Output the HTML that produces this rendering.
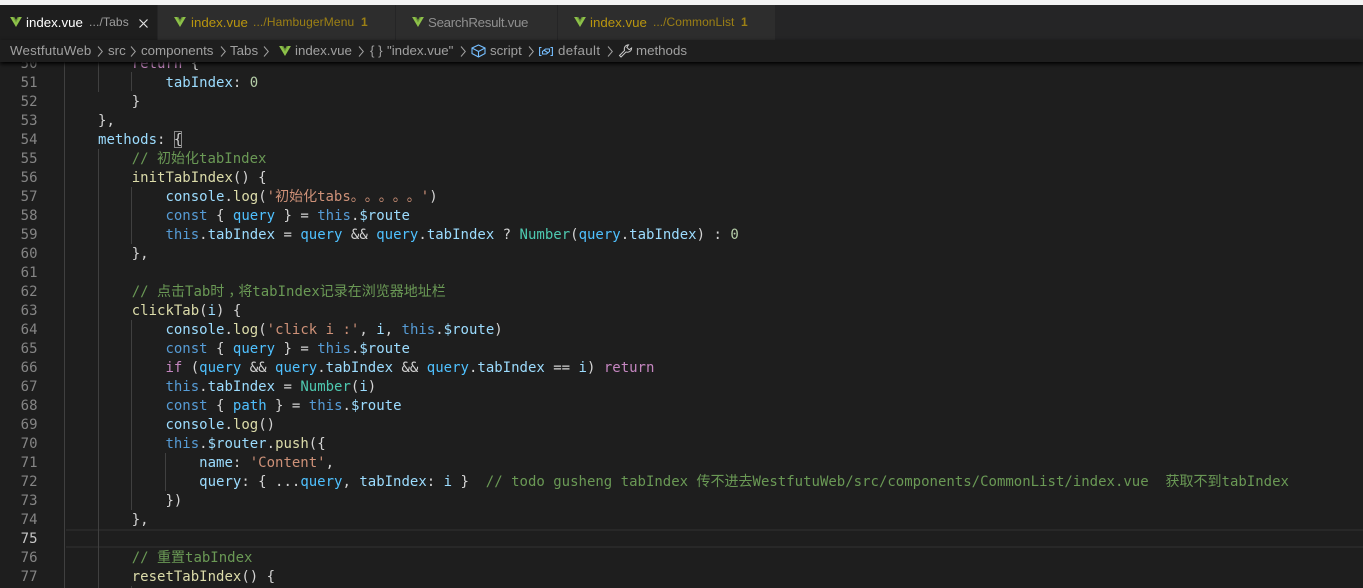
<!DOCTYPE html>
<html><head><meta charset="utf-8"><style>
*{margin:0;padding:0;box-sizing:border-box}
html,body{width:1363px;height:588px;overflow:hidden;background:#1e1e1e}
.a{position:absolute;white-space:pre}
#top{position:absolute;left:0;top:0;width:1363px;height:5px;background:#f3f3f3}
#tabs{position:absolute;left:0;top:5px;width:1363px;height:35px;background:#252526}
.tab{position:absolute;top:5px;height:35px;background:#2d2d2d;border-right:1px solid #252526}
.u{font:13.3px/35px "Liberation Sans","Noto Sans CJK SC",sans-serif;top:5px}
.d{font-size:12px;opacity:.8}
.w{color:#b8950f}
.b{font:13.3px/22px "Liberation Sans",sans-serif;top:40px;color:#a0a0a0}
#bc{position:absolute;left:0;top:40px;width:1363px;height:22px;background:#1e1e1e;box-shadow:0 2px 4px #000;z-index:2}
svg{position:absolute;overflow:visible}
#ed{position:absolute;left:0;top:62px;width:1363px;height:526px;overflow:hidden}
.g{position:absolute;width:1px;background:#404040}
.l{position:absolute;left:64.3px;height:19px;margin-top:1px;font:14px/19px "DejaVu Sans Mono","WenQuanYi Zen Hei",monospace;color:#d4d4d4;white-space:pre;text-spacing-trim:space-all}
.n{position:absolute;left:0;width:37.5px;margin-top:1px;text-align:right;font:14px/19px "DejaVu Sans Mono",monospace;color:#858585}
.k{color:#569cd6}.q{color:#4fc1ff}.p{color:#9cdcfe}.f{color:#dcdcaa}.c{color:#6a9955}.s{color:#ce9178}.m{color:#b5cea8}.t{color:#4ec9b0}.r{color:#c586c0}
</style></head><body>
<svg width="0" height="0" style="position:absolute"><defs>
<symbol id="v" viewBox="0 .5 13 11"><path fill="#8dc149" d="M0 .5H4.500L6.500 4 8.500 .5H13L6.500 11.500Z"/><path fill="#6a9438" d="M3 .5H4.500L6.500 4 8.500 .5H10L6.500 6.500Z"/></symbol>
<symbol id="c" viewBox="0 0 6 11"><path d="M1 .5 5.300 5.500 1 10.500" stroke="#a0a0a0" fill="none"/></symbol>
</defs></svg>
<div id="top"></div>
<div id="tabs"></div>
<div class="tab" style="left:0;width:158px;background:#1e1e1e"></div>
<div class="tab" style="left:158px;width:238px"></div>
<div class="tab" style="left:396px;width:162px"></div>
<div class="tab" style="left:558px;width:217px;border-right:0"></div>

<svg style="left:10px;top:17px" width="12" height="10"><use href="#v" width="12" height="10"/></svg>
<span class="a u" style="left:26px;color:#fff">index.vue</span>
<span class="a u d" style="left:89px;color:#bdbdbd;letter-spacing:.15px">.../Tabs</span>
<svg style="left:139px;top:19px" width="9" height="9"><path d="M.5.5 8.500 8.500M8.500 .5.5 8.500" stroke="#e0e0e0" stroke-width="1.200" fill="none"/></svg>

<svg style="left:174px;top:17px" width="12" height="10"><use href="#v" width="12" height="10"/></svg>
<span class="a u w" style="left:191px">index.vue</span>
<span class="a u d w" style="left:253px;letter-spacing:.12px">.../HambugerMenu</span>
<span class="a u d w" style="left:361px;font-weight:bold">1</span>

<svg style="left:412px;top:17px" width="12" height="10"><use href="#v" width="12" height="10"/></svg>
<span class="a u" style="left:428px;color:#8f8f8f;letter-spacing:-.3px">SearchResult.vue</span>

<svg style="left:574px;top:17px" width="12" height="10"><use href="#v" width="12" height="10"/></svg>
<span class="a u w" style="left:590px">index.vue</span>
<span class="a u d w" style="left:653px;letter-spacing:.05px">.../CommonList</span>
<span class="a u d w" style="left:741px;font-weight:bold">1</span>

<div id="bc"></div>
<div style="position:absolute;left:0;top:0;z-index:3">
<span class="a b" style="left:10px;letter-spacing:.2px">WestfutuWeb</span>
<svg style="left:97px;top:46px" width="6" height="11"><use href="#c" width="6" height="11"/></svg>
<span class="a b" style="left:108px">src</span>
<svg style="left:130px;top:46px" width="6" height="11"><use href="#c" width="6" height="11"/></svg>
<span class="a b" style="left:141px">components</span>
<svg style="left:220px;top:46px" width="6" height="11"><use href="#c" width="6" height="11"/></svg>
<span class="a b" style="left:230px">Tabs</span>
<svg style="left:263px;top:46px" width="6" height="11"><use href="#c" width="6" height="11"/></svg>
<svg style="left:279px;top:46px" width="12" height="10"><use href="#v" width="12" height="10"/></svg>
<span class="a b" style="left:295px">index.vue</span>
<svg style="left:358px;top:46px" width="6" height="11"><use href="#c" width="6" height="11"/></svg>
<span class="a b" style="left:370px">{ }</span>
<span class="a b" style="left:387px">"index.vue"</span>
<svg style="left:460px;top:46px" width="6" height="11"><use href="#c" width="6" height="11"/></svg>
<svg style="left:471px;top:44px" width="15" height="14" viewBox="0 0 15 14"><path d="M7.500 1 14 4v5.500L7.500 13 1 9.500V4ZM1 4l6.500 3.500L14 4M7.500 7.500V13" stroke="#75beff" stroke-width="1.100" fill="none"/></svg>
<span class="a b" style="left:490px">script</span>
<svg style="left:528px;top:46px" width="6" height="11"><use href="#c" width="6" height="11"/></svg>
<svg style="left:539px;top:47px" width="14" height="9" viewBox="0 0 14 9"><path d="M2.500 .5H.6v8H2.500M11.500 .5h1.900v8H11.500" stroke="#75beff" stroke-width="1.100" fill="none"/><path d="M3.500 4.500 6.500 2H10.500V4.500L7.500 7H3.500ZM5.500 3.500 8.500 5.500" stroke="#75beff" stroke-width="1.100" fill="none"/></svg>
<span class="a b" style="left:558px;letter-spacing:.35px">default</span>
<svg style="left:607px;top:46px" width="6" height="11"><use href="#c" width="6" height="11"/></svg>
<svg style="left:618px;top:44px" width="15" height="14" viewBox="0 0 14 14"><path d="M1 11.500 6 6.500C5.300 4 6.500 1 10 .9L8.300 3.300 10.700 5.700 13.100 4C13 7.500 10 8.700 7.500 8L2.500 13Z" stroke="#c9c9c9" stroke-width="1" fill="none"/></svg>
<span class="a b" style="left:636px">methods</span>
</div>

<div id="ed" style="font-size:0">
<div style="position:absolute;left:66px;top:467px;width:1297px;height:19px;border-top:2px solid #282828;border-bottom:2px solid #282828"></div>
<div class="g" style="left:64px;top:0;height:526px"></div>
<div class="g" style="left:98px;top:0;height:30px"></div>
<div class="g" style="left:98px;top:87px;height:439px"></div>
<div class="g" style="left:131px;top:10px;height:19px"></div>
<div class="g" style="left:131px;top:125px;height:57px"></div>
<div class="g" style="left:131px;top:258px;height:190px"></div>
<div class="g" style="left:131px;top:524px;height:2px"></div>
<div class="g" style="left:165px;top:391px;height:38px"></div>
<div style="position:absolute;left:174px;top:69px;width:8px;height:17px;border:1px solid #888"></div>

<div class="n" style="top:-8.500px">50</div><div class="l" style="top:-8.500px">        <span class="r">return</span> {</div>
<div class="n" style="top:10.500px">51</div><div class="l" style="top:10.500px">            <span class="p">tabIndex</span>: <span class="m">0</span></div>
<div class="n" style="top:29.500px">52</div><div class="l" style="top:29.500px">        }</div>
<div class="n" style="top:48.500px">53</div><div class="l" style="top:48.500px">    },</div>
<div class="n" style="top:67.500px">54</div><div class="l" style="top:67.500px">    <span class="p">methods</span>: {</div>
<div class="n" style="top:86.500px">55</div><div class="l c" style="top:86.500px">        // 初始化tabIndex</div>
<div class="n" style="top:105.500px">56</div><div class="l" style="top:105.500px">        <span class="f">initTabIndex</span>() {</div>
<div class="n" style="top:124.500px">57</div><div class="l" style="top:124.500px">            <span class="p">console</span>.<span class="f">log</span>(<span class="s">'初始化tabs。。。。。'</span>)</div>
<div class="n" style="top:143.500px">58</div><div class="l" style="top:143.500px">            <span class="k">const</span> { <span class="q">query</span> } = <span class="k">this</span>.<span class="p">$route</span></div>
<div class="n" style="top:162.500px">59</div><div class="l" style="top:162.500px">            <span class="k">this</span>.<span class="p">tabIndex</span> = <span class="q">query</span> &amp;&amp; <span class="q">query</span>.<span class="p">tabIndex</span> ? <span class="t">Number</span>(<span class="q">query</span>.<span class="p">tabIndex</span>) : <span class="m">0</span></div>
<div class="n" style="top:181.500px">60</div><div class="l" style="top:181.500px">        },</div>
<div class="n" style="top:200.500px">61</div>
<div class="n" style="top:219.500px">62</div><div class="l c" style="top:219.500px">        // 点击Tab时<span style="display:inline-block;transform:translateX(4px)">，</span>将tabIndex记录在浏览器地址栏</div>
<div class="n" style="top:238.500px">63</div><div class="l" style="top:238.500px">        <span class="f">clickTab</span>(<span class="p">i</span>) {</div>
<div class="n" style="top:257.500px">64</div><div class="l" style="top:257.500px">            <span class="p">console</span>.<span class="f">log</span>(<span class="s">'click i :'</span>, <span class="p">i</span>, <span class="k">this</span>.<span class="p">$route</span>)</div>
<div class="n" style="top:276.500px">65</div><div class="l" style="top:276.500px">            <span class="k">const</span> { <span class="q">query</span> } = <span class="k">this</span>.<span class="p">$route</span></div>
<div class="n" style="top:295.500px">66</div><div class="l" style="top:295.500px">            <span class="r">if</span> (<span class="q">query</span> &amp;&amp; <span class="q">query</span>.<span class="p">tabIndex</span> &amp;&amp; <span class="q">query</span>.<span class="p">tabIndex</span> == <span class="p">i</span>) <span class="r">return</span></div>
<div class="n" style="top:314.500px">67</div><div class="l" style="top:314.500px">            <span class="k">this</span>.<span class="p">tabIndex</span> = <span class="t">Number</span>(<span class="p">i</span>)</div>
<div class="n" style="top:333.500px">68</div><div class="l" style="top:333.500px">            <span class="k">const</span> { <span class="q">path</span> } = <span class="k">this</span>.<span class="p">$route</span></div>
<div class="n" style="top:352.500px">69</div><div class="l" style="top:352.500px">            <span class="p">console</span>.<span class="f">log</span>()</div>
<div class="n" style="top:371.500px">70</div><div class="l" style="top:371.500px">            <span class="k">this</span>.<span class="p">$router</span>.<span class="f">push</span>({</div>
<div class="n" style="top:390.500px">71</div><div class="l" style="top:390.500px">                <span class="p">name</span>: <span class="s">'Content'</span>,</div>
<div class="n" style="top:409.500px">72</div><div class="l" style="top:409.500px">                <span class="p">query</span>: { ...<span class="q">query</span>, <span class="p">tabIndex</span>: <span class="p">i</span> }  <span class="c">// todo gusheng tabIndex 传不进去WestfutuWeb/src/components/CommonList/index.vue  获取不到tabIndex</span></div>
<div class="n" style="top:428.500px">73</div><div class="l" style="top:428.500px">            })</div>
<div class="n" style="top:447.500px">74</div><div class="l" style="top:447.500px">        },</div>
<div class="n" style="top:466.500px;color:#c6c6c6">75</div>
<div class="n" style="top:485.500px">76</div><div class="l c" style="top:485.500px">        // 重置tabIndex</div>
<div class="n" style="top:504.500px">77</div><div class="l" style="top:504.500px">        <span class="f">resetTabIndex</span>() {</div>
</div>
</body></html>
